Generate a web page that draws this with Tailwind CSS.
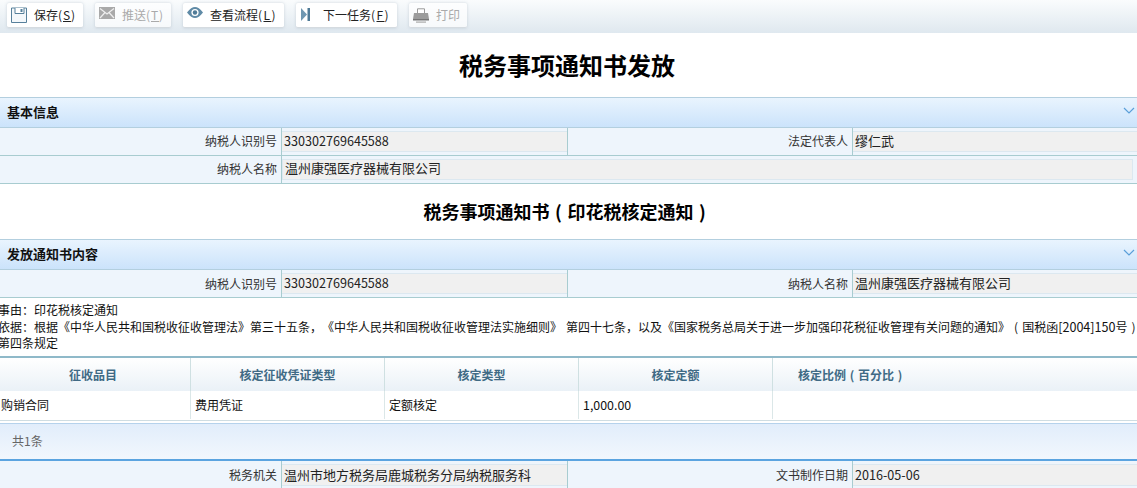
<!DOCTYPE html>
<html lang="zh">
<head>
<meta charset="utf-8">
<script src="https://cdn.jsdelivr.net/npm/@tailwindcss/browser@4"></script>
</head>
<body class="bg-white overflow-hidden text-[12px] text-[#222] [text-spacing-trim:space-all] font-['Noto_Sans_CJK_SC',sans-serif]">
<div class="w-[1137px] h-[488px] overflow-hidden">
  <!-- toolbar -->
  <div class="h-[33px] flex items-start gap-[12px] pl-[7px] pt-[3px] bg-gradient-to-b from-[#fafcfd] to-[#dfe8ef]">
    <div class="w-[76px] h-[25px] flex items-center pl-[4px] gap-[7px] bg-white rounded-[2px] border-b border-[#d5dbe0] shadow-[0_0_3px_rgba(150,165,180,0.45)]">
      <svg width="16" height="16" viewBox="0 0 16 16"><path d="M0.5 1H15.5V15.5H0.5Z" fill="#f4f8fb" stroke="#57809b"/><path d="M4 1V6.5H13V1" fill="#fff" stroke="#57809b"/><rect x="9.5" y="2" width="2" height="3" fill="#57809b"/></svg>
      <span>保存<span class="tracking-[0.9px]">(<u>S</u>)</span></span>
    </div>
    <div class="w-[76px] h-[25px] flex items-center pl-[4px] gap-[7px] bg-white/70 rounded-[2px] border-b border-[#d5dbe0] shadow-[0_0_3px_rgba(150,165,180,0.45)] text-[#aaa]">
      <svg width="16" height="12" viewBox="0 0 16 12" class="-mt-[4px]"><rect width="16" height="12" fill="#a9a9a9"/><path d="M1 1.5L8 7L15 1.5M1 11L6 5.5M15 11L10 5.5" fill="none" stroke="#eee" stroke-width="1.2"/></svg>
      <span>推送<span class="tracking-[0.9px]">(<u>T</u>)</span></span>
    </div>
    <div class="w-[101px] h-[25px] flex items-center pl-[4px] gap-[7px] bg-white rounded-[2px] border-b border-[#d5dbe0] shadow-[0_0_3px_rgba(150,165,180,0.45)]">
      <svg width="16" height="11" viewBox="0 0 16 11" class="-mt-[5px]"><path d="M0 5.5C3 1.5 5.5 0 8 0S13 1.5 16 5.5C13 9.5 10.5 11 8 11S3 9.5 0 5.5Z" fill="#5f8aa6"/><circle cx="8" cy="5.5" r="3.6" fill="#fff"/><circle cx="8" cy="5.5" r="2.2" fill="#4f7a96"/></svg>
      <span>查看流程<span class="tracking-[1.4px]">(<u>L</u>)</span></span>
    </div>
    <div class="w-[101px] h-[25px] flex items-center pl-[5px] gap-[13px] bg-white rounded-[2px] border-b border-[#d5dbe0] shadow-[0_0_3px_rgba(150,165,180,0.45)]">
      <svg width="9" height="13" viewBox="0 0 9 13" class="-mt-[2px]"><path d="M0 0L6 6.5L0 13Z" fill="#6f97b1"/><rect x="6.5" width="2.5" height="13" fill="#4f7a96"/></svg>
      <span>下一任务<span class="tracking-[1.4px]">(<u>F</u>)</span></span>
    </div>
    <div class="w-[58px] h-[25px] flex items-center pl-[4px] gap-[7px] bg-white/70 rounded-[2px] border-b border-[#d5dbe0] shadow-[0_0_3px_rgba(150,165,180,0.45)] text-[#aaa]">
      <svg width="16" height="15" viewBox="0 0 16 15"><path d="M4.5 5V0.8H11.5V5" fill="#fff" stroke="#9a9a9a"/><path d="M1 5H15L16 11H0Z" fill="#9c9c9c"/><rect x="0" y="11" width="16" height="1.5" fill="#777"/><rect x="3" y="13.5" width="10" height="1.2" fill="#aaa"/></svg>
      <span>打印</span>
    </div>
  </div>

  <!-- title -->
  <div class="h-[64px] flex items-center justify-center pr-[3px] text-[24px] font-bold text-black">税务事项通知书发放</div>

  <!-- section -->
  <div class="h-[31px] flex items-center justify-between pl-[7px] pr-[2px] pb-[1px] border-y border-[#b3cfdf] bg-gradient-to-b from-[#e9f4fe] to-[#cbe3fb]">
    <span class="text-[13px] font-bold text-[#111]">基本信息</span>
    <svg width="12" height="7" viewBox="0 0 12 7" class="-mt-[4px]"><path d="M1 1L6 6L11 1" fill="none" stroke="#5b9fd9" stroke-width="1.2"/></svg>
  </div>
  <div class="h-[28px] grid grid-cols-[281px_287px_284px_285px] bg-[#eef5fc] border-b border-[#a8ccd0]">
    <div class="flex items-center justify-end pr-[4px] pb-[1px] text-[#333]">纳税人识别号</div>
    <div class="border-x border-[#a8ccd0] py-[3px] flex"><div class="flex-1 bg-[#f0f0f0] border-y border-[#dce8f0] flex items-center pl-[2px] pb-[1px] text-[12.6px] leading-none">330302769645588</div></div>
    <div class="flex items-center justify-end pr-[4px] pb-[1px] text-[#333]">法定代表人</div>
    <div class="border-l border-[#a8ccd0] py-[3px] flex"><div class="flex-1 bg-[#f0f0f0] border-y border-[#dce8f0] flex items-center pl-[2px] pb-[3px] text-[13px] leading-none">缪仁武</div></div>
  </div>
  <div class="h-[28px] grid grid-cols-[281px_1fr] bg-[#eef5fc] border-b border-[#a8ccd0]">
    <div class="flex items-center justify-end pr-[4px] pb-[2px] text-[#333]">纳税人名称</div>
    <div class="border-l border-[#a8ccd0] py-[3px] pr-[4px] flex"><div class="flex-1 bg-[#f0f0f0] border border-[#dce8f0] flex items-center pl-[2px] pb-[5px] text-[13px] leading-none">温州康强医疗器械有限公司</div></div>
  </div>

  <!-- subtitle -->
  <div class="h-[55px] flex items-center justify-center pr-[2px] text-[18px] font-bold text-black">税务事项通知书<span class="inline-block w-[18px] text-center">(</span>印花税核定通知<span class="inline-block w-[18px] text-center">)</span></div>

  <!-- section -->
  <div class="h-[31px] flex items-center justify-between pl-[7px] pr-[2px] pb-[1px] border-y border-[#b3cfdf] bg-gradient-to-b from-[#e9f4fe] to-[#cbe3fb]">
    <span class="text-[13px] font-bold text-[#111]">发放通知书内容</span>
    <svg width="12" height="7" viewBox="0 0 12 7" class="-mt-[4px]"><path d="M1 1L6 6L11 1" fill="none" stroke="#5b9fd9" stroke-width="1.2"/></svg>
  </div>
  <div class="h-[28px] grid grid-cols-[281px_287px_284px_285px] bg-[#eef5fc] border-b border-[#a8ccd0]">
    <div class="flex items-center justify-end pr-[4px] text-[#333]">纳税人识别号</div>
    <div class="border-x border-[#a8ccd0] py-[3px] flex"><div class="flex-1 bg-[#f0f0f0] border-y border-[#dce8f0] flex items-center pl-[2px] text-[12.6px] leading-none">330302769645588</div></div>
    <div class="flex items-center justify-end pr-[4px] text-[#333]">纳税人名称</div>
    <div class="border-l border-[#a8ccd0] py-[3px] flex"><div class="flex-1 bg-[#f0f0f0] border-y border-[#dce8f0] flex items-center pl-[2px] pb-[2px] text-[13px] leading-none">温州康强医疗器械有限公司</div></div>
  </div>

  <!-- body text -->
  <div class="h-[58px] pt-[4px] leading-[16.5px] whitespace-nowrap text-[#111]">
    <div class="-ml-[2px]">事由<span class="font-['Noto_Sans_CJK_TC']">：</span>印花税核定通知</div>
    <div class="-ml-[2px]">依据<span class="font-['Noto_Sans_CJK_TC']">：</span>根据《中华人民共和国税收征收管理法》第三十五条<span class="font-['Noto_Sans_CJK_TC']">，</span>《中华人民共和国税收征收管理法实施细则》<span class="inline-block w-[4px]"></span>第四十七条<span class="font-['Noto_Sans_CJK_TC']">，</span>以及《国家税务总局关于进一步加强印花税征收管理有关问题的通知》<span class="inline-block w-[12px] text-center">(</span>国税函<span class="text-[12.6px]">[2004]150</span>号<span class="inline-block w-[12px] text-center">)</span></div>
    <div class="-ml-[2px]">第四条规定</div>
  </div>

  <!-- table -->
  <div class="h-[35px] grid grid-cols-[191px_194px_194px_194px_1fr] border-t-2 border-[#8fb9c9] bg-gradient-to-b from-white to-[#eaf1f7] font-bold text-[#3f6a85]">
    <div class="flex items-center justify-center pr-[4px] border-r border-[#cfe0e2]">征收品目</div>
    <div class="flex items-center justify-center border-r border-[#cfe0e2]">核定征收凭证类型</div>
    <div class="flex items-center justify-center border-r border-[#cfe0e2]">核定类型</div>
    <div class="flex items-center justify-center border-r border-[#cfe0e2]">核定定额</div>
    <div class="flex items-center pl-[25px]">核定比例<span class="inline-block w-[12px] text-center">(</span>百分比<span class="inline-block w-[12px] text-center">)</span></div>
  </div>
  <div class="h-[30px] grid grid-cols-[191px_194px_194px_194px_1fr] border-b border-[#cfdde2] pb-[1px] text-[#111]">
    <div class="flex items-center pl-[1px] border-r border-[#dbe7e8]">购销合同</div>
    <div class="flex items-center pl-[4px] border-r border-[#dbe7e8]">费用凭证</div>
    <div class="flex items-center pl-[4px] border-r border-[#dbe7e8]">定额核定</div>
    <div class="flex items-center pl-[4px] border-r border-[#dbe7e8] text-[12.4px]">1,000.00</div>
    <div></div>
  </div>

  <!-- pager -->
  <div class="mt-[2px] h-[38px] flex items-center pl-[12px] pb-[2px] border-t border-[#b5d2ec] border-b-2 border-b-[#5ba4e0] bg-gradient-to-b from-[#e1edfb] to-[#f2f7fd] text-[#666]">共1条</div>

  <div class="h-[28px] grid grid-cols-[281px_287px_284px_285px] bg-[#eef5fc]">
    <div class="flex items-center justify-end pr-[4px] text-[#333]">税务机关</div>
    <div class="border-x border-[#a8ccd0] py-[3px] flex"><div class="flex-1 bg-[#f0f0f0] border-y border-[#dce8f0] flex items-center pl-[2px] pb-[2px] text-[13px] leading-none">温州市地方税务局鹿城税务分局纳税服务科</div></div>
    <div class="flex items-center justify-end pr-[4px] text-[#333]">文书制作日期</div>
    <div class="border-l border-[#a8ccd0] py-[3px] flex"><div class="flex-1 bg-[#f0f0f0] border-y border-[#dce8f0] flex items-center pl-[2px] text-[12.6px] leading-none">2016-05-06</div></div>
  </div>
</div>
</body>
</html>
